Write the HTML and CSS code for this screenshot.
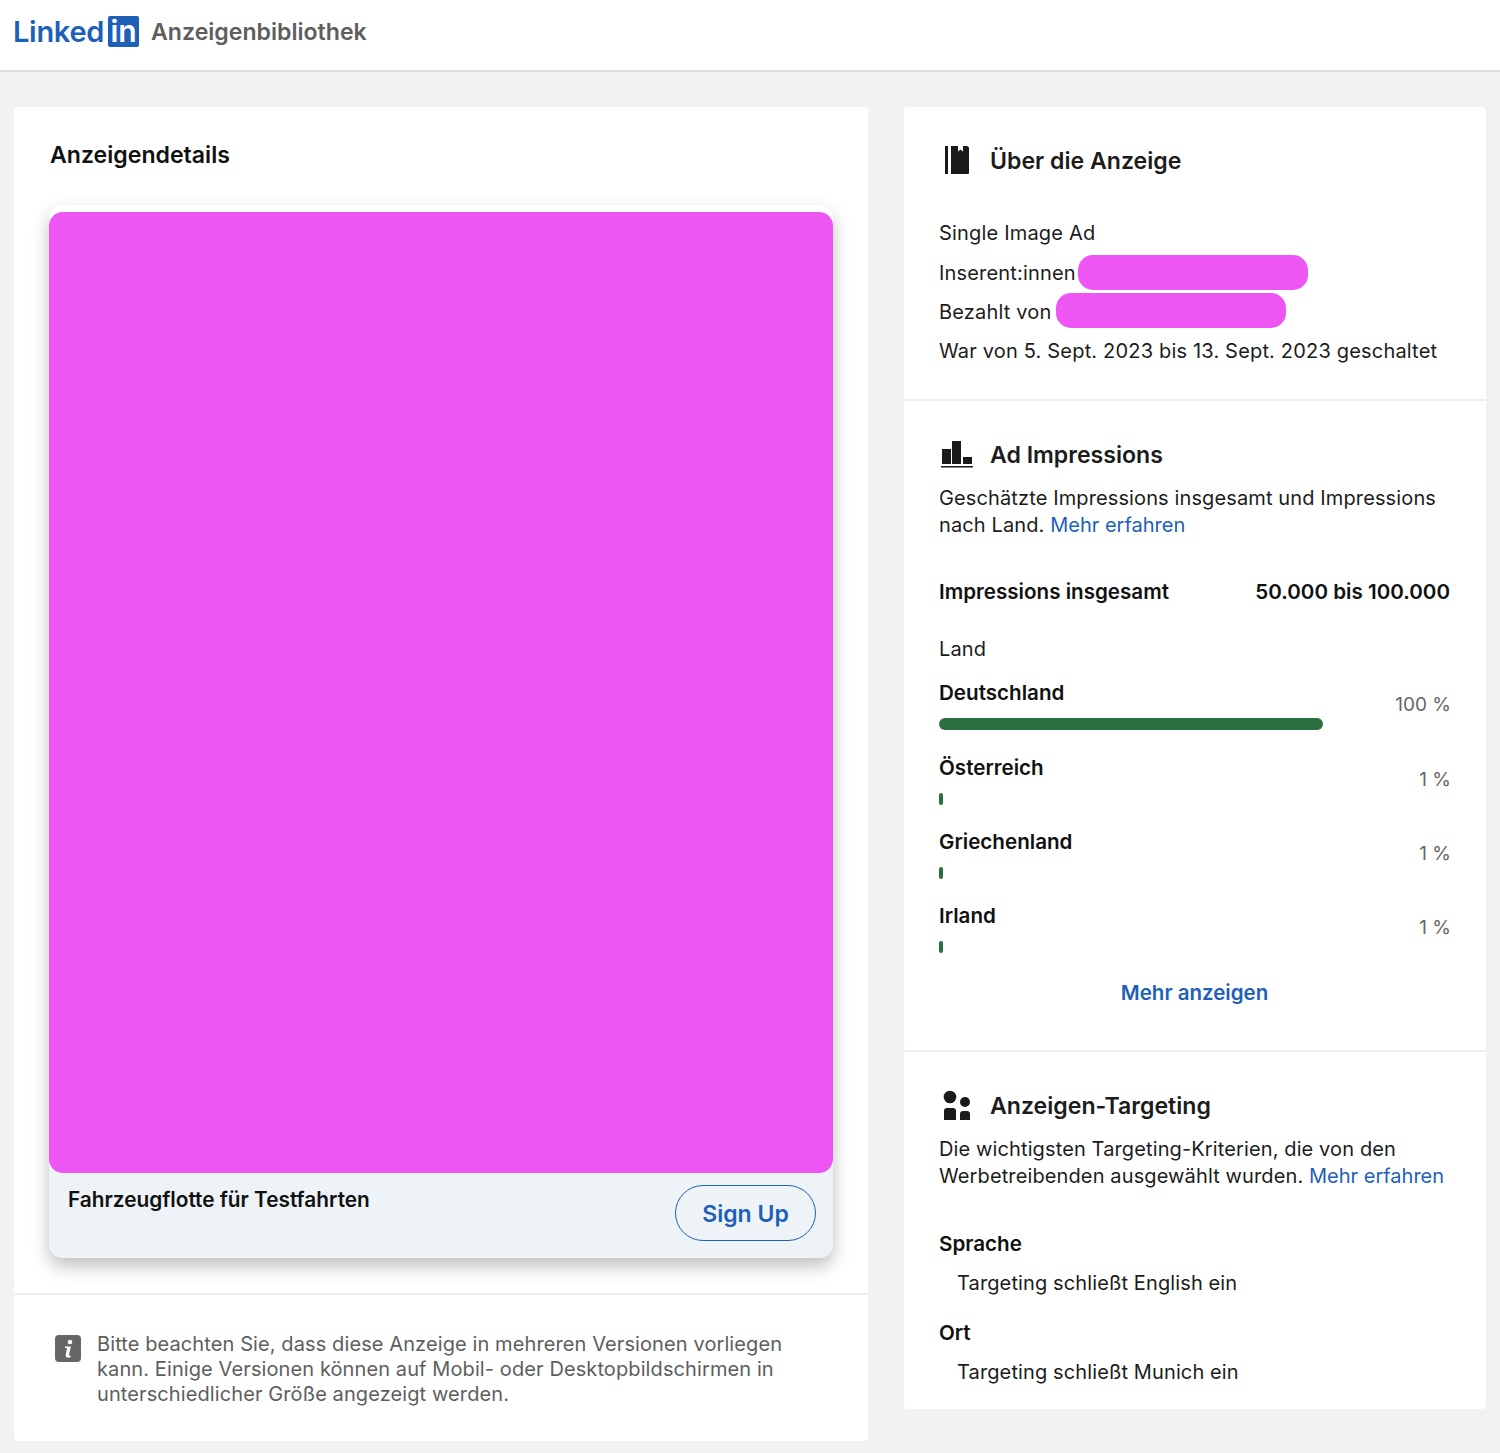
FILE: index.html
```html
<!DOCTYPE html>
<html lang="de">
<head>
<meta charset="utf-8">
<title>Anzeigenbibliothek</title>
<link rel="stylesheet" href="styles.css">
</head>
<body>
<header class="topbar">
  <div class="logo"><span class="logo-word">Linked</span><span class="logo-box">in</span></div>
  <span class="brand-title">Anzeigenbibliothek</span>
</header>
<main class="layout">
  <section class="card left-card">
    <div class="details">
      <h1 class="details-title">Anzeigendetails</h1>
      <div class="ad">
        <div class="ad-media"></div>
        <div class="ad-footer">
          <span class="ad-headline">Fahrzeugflotte für Testfahrten</span>
          <span class="ad-button">Sign Up</span>
        </div>
      </div>
    </div>
    <div class="note">
      <svg class="note-icon" viewBox="0 0 26 27" width="26" height="27"><rect width="26" height="27" rx="4" fill="#666"/><circle cx="15" cy="7" r="2.300" fill="#fff"/><path d="M10 11.500h5.800l-1.700 8.300c-.2 1 .5 1.200 1.800.9l-.3 1.500c-3 1-5.300.4-4.900-2.300l1.300-6.900H10z" fill="#fff"/></svg>
      <p class="note-text">Bitte beachten Sie, dass diese Anzeige in mehreren Versionen vorliegen kann. Einige Versionen können auf Mobil- oder Desktopbildschirmen in unterschiedlicher Größe angezeigt werden.</p>
    </div>
  </section>
  <aside class="card right-card">
    <section class="panel panel-about">
      <h2 class="panel-title">
        <svg class="panel-icon" viewBox="0 0 36 36" width="36" height="36"><path d="M6 3h3v28H6zM12 3h7v5.500l2.500-2 2.500 2V3h4c1 0 2 1 2 2v25c0 1-1 1-2 1H12z" fill="#1a1a1a"/></svg>
        Über die Anzeige
      </h2>
      <p class="about-line about-first">Single Image Ad</p>
      <p class="about-line about-row">Inserent:innen <span class="blot blot-a"></span></p>
      <p class="about-line about-row">Bezahlt von <span class="blot blot-b"></span></p>
      <p class="about-line">War von 5. Sept. 2023 bis 13. Sept. 2023 geschaltet</p>
    </section>
    <section class="panel panel-impressions">
      <h2 class="panel-title">
        <svg class="panel-icon" viewBox="0 0 36 36" width="36" height="36"><path d="M3 12h9v15H3zM13 4h9v23h-9zM24 20h9v7h-9zM2 29h32v1.600H2z" fill="#1a1a1a"/></svg>
        Ad Impressions
      </h2>
      <p class="lead">Geschätzte Impressions insgesamt und Impressions nach Land. <a class="link" href="#">Mehr erfahren</a></p>
      <div class="total"><strong>Impressions insgesamt</strong><strong>50.000 bis 100.000</strong></div>
      <p class="land">Land</p>
      <div class="country country-top">
        <div class="country-main"><strong>Deutschland</strong><div class="bar bar-full"></div></div>
        <span class="pct">100 %</span>
      </div>
      <div class="country">
        <div class="country-main"><strong>Österreich</strong><div class="bar bar-min"></div></div>
        <span class="pct">1 %</span>
      </div>
      <div class="country">
        <div class="country-main"><strong>Griechenland</strong><div class="bar bar-min"></div></div>
        <span class="pct">1 %</span>
      </div>
      <div class="country">
        <div class="country-main"><strong>Irland</strong><div class="bar bar-min"></div></div>
        <span class="pct">1 %</span>
      </div>
      <a class="more" href="#">Mehr anzeigen</a>
    </section>
    <section class="panel panel-targeting">
      <h2 class="panel-title">
        <svg class="panel-icon" viewBox="0 0 36 36" width="36" height="36"><circle cx="11" cy="9" r="6.300" fill="#1a1a1a"/><circle cx="26" cy="14" r="5" fill="#1a1a1a"/><path d="M5 23c0-2 1-3 3-3h6c2 0 3 1 3 3v9H5zM21 26c0-2 1-3 3-3h4c2 0 3 1 3 3v6H21z" fill="#1a1a1a"/></svg>
        Anzeigen-Targeting
      </h2>
      <p class="lead">Die wichtigsten Targeting-Kriterien, die von den Werbetreibenden ausgewählt wurden. <a class="link" href="#">Mehr erfahren</a></p>
      <h3 class="crit crit-first">Sprache</h3>
      <p class="crit-value">Targeting schließt English ein</p>
      <h3 class="crit">Ort</h3>
      <p class="crit-value">Targeting schließt Munich ein</p>
    </section>
  </aside>
</main>
</body>
</html>
```
FILE: styles.css
```css
* { box-sizing: border-box; }
html, body { margin: 0; padding: 0; }
body {
  background: #f3f2f0;
  color: #1c1c1c;
  font-family: Inter, "Liberation Sans", sans-serif;
  font-size: 20px;
  letter-spacing: .12px;
  height: 1453px;
  overflow: hidden;
}
h1, h2, h3, p { margin: 0; font-weight: inherit; font-size: inherit; }
a { text-decoration: none; }

.topbar {
  height: 72px;
  background: #fff;
  border-bottom: 2px solid #dfdedb;
  display: flex;
  align-items: center;
  padding: 0 0 7px 13px;
}
.logo { display: flex; align-items: center; }
.logo-word { color: #1d5fb9; font-size: 29px; font-weight: 600; letter-spacing: -0.3px; line-height: 32px; }
.logo-box {
  width: 31px; height: 31px; margin-left: 4px;
  background: #1d5fb9; color: #fff; border-radius: 2px;
  font-size: 30px; font-weight: 600; letter-spacing: 0; line-height: 31px; text-align: center;
}
.brand-title { margin-left: 12px; color: #5e5e5e; font-size: 23.1px; letter-spacing: 0; font-weight: 600; }

.layout {
  display: flex;
  align-items: flex-start;
  gap: 36px;
  padding: 35px 14px 0;
}
.card { background: #fff; border-radius: 4px; }
.left-card { width: 854px; height: 1334px; display: flex; flex-direction: column; }
.right-card { width: 582px; height: 1302px; }

.details { padding: 31px 35px 0; height: 1188px; border-bottom: 2px solid #f0efec; }
.details-title { font-size: 23.1px; letter-spacing: 0; font-weight: 600; color: #111; line-height: 34px; margin-left: 1px; }
.ad {
  margin-top: 33px;
  height: 1053px;
  padding-top: 7px;
  border-radius: 14px;
  background: linear-gradient(#fff 0, #fff 960px, #eef3f8 960px);
  box-shadow: 0 8px 18px rgba(0,0,0,.26);
  display: flex; flex-direction: column;
}
.ad-media { height: 961px; background: #ed56f3; border-radius: 14px; }
.ad-footer { flex: 1; display: flex; justify-content: space-between; padding: 12px 17px 0 19px; }
.ad-headline { font-size: 20.8px; letter-spacing: 0; font-weight: 600; color: #111; line-height: 30px; }
.ad-button {
  width: 141px; height: 56px; padding-top: 2px;
  border: 1.5px solid #1d5fb9; border-radius: 28px;
  color: #1d5fb9; font-size: 23px; letter-spacing: 0; font-weight: 600;
  display: flex; align-items: center; justify-content: center;
}

.note { display: flex; gap: 16px; padding: 37px 80px 0 41px; }
.note-icon { flex: none; margin-top: 3px; }
.note-text { color: #5e5e5e; font-size: 20px; letter-spacing: .1px; line-height: 25px; }

.panel { padding: 36px 36px 0 35px; border-bottom: 2px solid #f0efec; }
.panel:last-child { border-bottom: 0; }
.panel-about { height: 294px; }
.panel-impressions { height: 651px; }
.panel-title {
  display: flex; align-items: center; gap: 15px;
  font-size: 23.1px; letter-spacing: 0; font-weight: 600; color: #1c1c1c;
  line-height: 36px;
}
.panel-icon { flex: none; }

.about-line { line-height: 39px; letter-spacing: .18px; }
.about-first { margin: 34px 0 1px; line-height: 40px; }
.about-row { display: flex; align-items: center; gap: 2px; }
.blot { display: inline-block; height: 35px; width: 230px; border-radius: 15px; background: #ed56f3; }
.blot-a { margin-bottom: 3px; }
.blot-b { margin-bottom: 4px; margin-left: 2px; }

.lead { margin-top: 12px; line-height: 27px; }
.link { color: #1d5fb9; letter-spacing: 0; }
strong { font-weight: 600; font-size: 20.6px; letter-spacing: 0; color: #111; }

.total { display: flex; justify-content: space-between; margin-top: 39px; line-height: 28px; }
.land { margin-top: 29px; line-height: 28px; }
.country { display: flex; justify-content: space-between; height: 74px; }
.country-top { margin-top: 16px; height: 75px; }
.country-main { flex: 1; line-height: 28px; }
.bar { height: 12px; margin-top: 11px; background: #2c6f3f; border-radius: 6px; }
.bar-full { width: 384px; }
.bar-min { width: 4px; }
.pct { color: #666; font-size: 19px; letter-spacing: 0; padding-top: 12px; margin-right: -1px; line-height: 28px; }
.more { display: block; text-align: center; color: #1d5fb9; font-size: 20.5px; letter-spacing: 0; font-weight: 600; line-height: 28px; margin-top: 3px; }

.crit { font-weight: 600; font-size: 20.6px; letter-spacing: 0; color: #111; line-height: 28px; margin-top: 22px; }
.crit-first { margin-top: 40px; }
.crit-value { padding-left: 18px; line-height: 28px; margin-top: 11px; }
```
